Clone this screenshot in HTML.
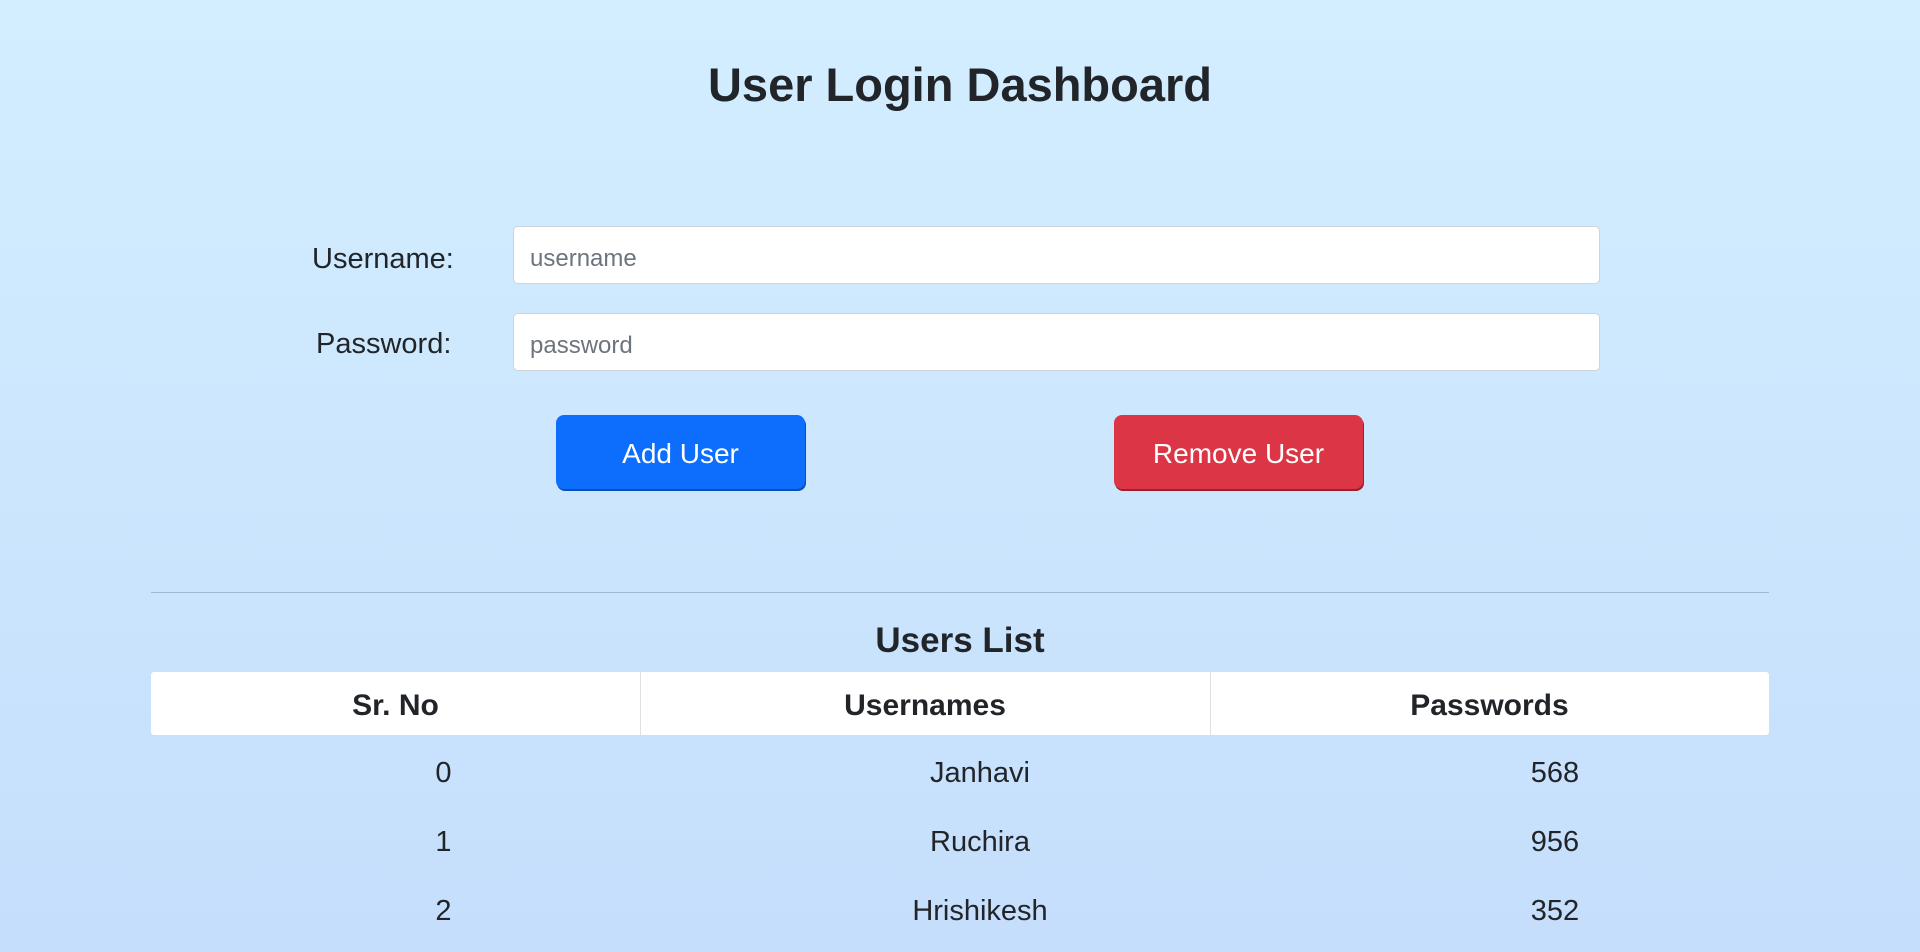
<!DOCTYPE html>
<html><head><meta charset="utf-8"><style>
*{box-sizing:border-box;margin:0;padding:0}
body{width:1920px;height:952px;overflow:hidden;background:linear-gradient(#d3eeff,#c5defc);font-family:"Liberation Sans",sans-serif;color:#212529;position:relative}
.a{position:absolute}
h1{position:absolute;left:0;width:1920px;text-align:center;top:57px;font-size:47px;font-weight:bold}
.lbl{font-size:29px}
.inp{background:#fff;border:1px solid #ced4da;border-radius:5px;left:513px;width:1087px;height:58px;font-size:24px;color:#6c757d;padding:18px 16px 0}
.btn{top:415px;height:74px;width:249px;border-radius:8px;color:#fff;font-size:28px;text-align:center;line-height:78px}
.row{position:absolute;font-size:29px;text-align:center}
</style></head><body>
<h1>User Login Dashboard</h1>
<div class="a lbl" style="left:312px;top:243px">Username:</div>
<div class="a lbl" style="left:316px;top:328px">Password:</div>
<div class="a inp" style="top:226px">username</div>
<div class="a inp" style="top:313px">password</div>
<div class="a btn" style="left:556px;background:#0d6efd;box-shadow:1px 2px 0 #0a4fb8">Add User</div>
<div class="a btn" style="left:1114px;background:#dc3545;box-shadow:1px 2px 0 #9c1f2b">Remove User</div>
<div class="a" style="left:151px;top:592px;width:1618px;height:1px;background:#9fb9d3"></div>
<div class="a" style="left:0;width:1920px;text-align:center;top:621px;font-size:35px;font-weight:bold">Users List</div>
<div class="a" style="left:151px;top:672px;width:1618px;height:63px;background:#fff;border-radius:3px"></div>
<div class="a" style="left:640px;top:672px;width:1px;height:63px;background:#dee2e6"></div>
<div class="a" style="left:1210px;top:672px;width:1px;height:63px;background:#dee2e6"></div>
<div class="row" style="left:151px;width:489px;top:689px;font-weight:bold;font-size:30px">Sr. No</div>
<div class="row" style="left:640px;width:570px;top:689px;font-weight:bold;font-size:30px">Usernames</div>
<div class="row" style="left:1210px;width:559px;top:689px;font-weight:bold;font-size:30px">Passwords</div>
<div class="row" style="left:151px;width:585px;top:757px">0</div>
<div class="row" style="left:640px;width:680px;top:757px">Janhavi</div>
<div class="row" style="left:1210px;width:690px;top:757px">568</div>
<div class="row" style="left:151px;width:585px;top:826px">1</div>
<div class="row" style="left:640px;width:680px;top:826px">Ruchira</div>
<div class="row" style="left:1210px;width:690px;top:826px">956</div>
<div class="row" style="left:151px;width:585px;top:895px">2</div>
<div class="row" style="left:640px;width:680px;top:895px">Hrishikesh</div>
<div class="row" style="left:1210px;width:690px;top:895px">352</div>
</body></html>
